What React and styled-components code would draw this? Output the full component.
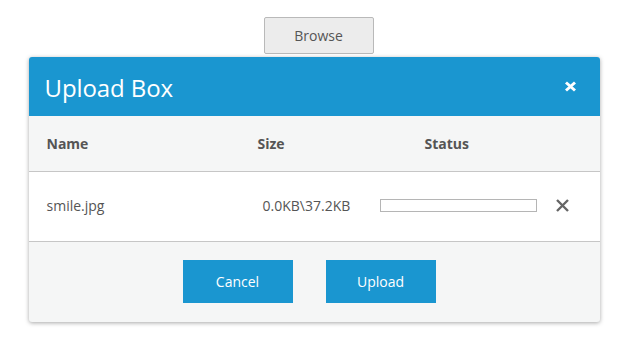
import React from 'react';
import styled, { createGlobalStyle } from 'styled-components';

const GlobalStyle = createGlobalStyle`
    html, body {
        margin: 0;
        padding: 0;
        background: #ffffff;
    }
    body {
        font-family: 'Open Sans', 'Noto Sans', sans-serif;
    }
`;

const Page = styled.div`
    width: 619px;
    height: 343px;
    display: flex;
    flex-direction: column;
    align-items: center;
    padding-top: 17px;
    box-sizing: border-box;
`;

const BrowseButton = styled.button`
    width: 110px;
    height: 37px;
    margin-left: 18px;
    box-sizing: border-box;
    background: #ececec;
    border: 1px solid #b9b9b9;
    border-radius: 2px;
    font-family: 'Open Sans', sans-serif;
    font-size: 14px;
    color: #555;
    padding: 0;
`;

const Dialog = styled.div`
    width: 571px;
    margin-top: 3px;
    margin-left: 9px;
    background: #f5f6f6;
    border-radius: 3px;
    box-shadow: 0 1px 4px rgba(0, 0, 0, 0.35);
    overflow: hidden;
`;

const Header = styled.div`
    height: 59px;
    background: #1a96d0;
    display: flex;
    align-items: center;
    justify-content: space-between;
    padding: 0 23px 0 16px;
`;

const Title = styled.div`
    color: #ffffff;
    font-size: 24px;
    font-weight: 400;
    letter-spacing: -0.1px;
    margin-top: 1px;
`;

const Row = styled.div`
    display: grid;
    grid-template-columns: 211px 122px 175px 1fr;
    align-items: center;
    height: ${({ h }) => h}px;
    padding-left: 18px;
    background: ${({ bg }) => bg};
    border-bottom: 1px solid #c6c6c6;
    color: #555555;
    font-size: 14px;
`;

const HeadCell = styled.div`
    font-weight: 700;
    color: #555555;
    padding-left: ${({ pl }) => pl || 0}px;
`;

const Cell = styled.div`
    color: #555555;
    padding-left: ${({ pl }) => pl || 0}px;
    margin-top: -2px;
`;

const Progress = styled.div`
    width: 157px;
    height: 13px;
    box-sizing: border-box;
    border: 1px solid #b5b5b5;
    background: #ffffff;
    margin-top: -3px;
`;

const RemoveIcon = styled.svg`
    display: block;
    margin-left: 0;
    margin-top: -3px;
`;

const Footer = styled.div`
    height: 80px;
    display: flex;
    justify-content: center;
    align-items: flex-start;
    gap: 33px;
    padding: 18px 10px 0 0;
    box-sizing: border-box;
`;

const ActionButton = styled.button`
    width: 110px;
    height: 43px;
    border: none;
    background: #1a96d0;
    color: #ffffff;
    font-family: 'Open Sans', sans-serif;
    font-size: 14px;
    padding: 0;
`;

export default function App() {
    return (
        <>
            <GlobalStyle />
            <Page>
                <BrowseButton>Browse</BrowseButton>
                <Dialog>
                    <Header>
                        <Title>Upload Box</Title>
                        <svg width="13" height="11" viewBox="0 0 13 11">
                            <path d="M2 1.5 L11 9.5 M11 1.5 L2 9.5" stroke="#fff" strokeWidth="3" />
                        </svg>
                    </Header>
                    <Row h={55} bg="#f5f6f6">
                        <HeadCell>Name</HeadCell>
                        <HeadCell>Size</HeadCell>
                        <HeadCell pl={45}>Status</HeadCell>
                        <div />
                    </Row>
                    <Row h={69} bg="#ffffff">
                        <Cell>smile.jpg</Cell>
                        <Cell pl={5}>0.0KB\37.2KB</Cell>
                        <Progress />
                        <RemoveIcon width="15" height="15" viewBox="0 0 15 15">
                            <path d="M2 2 L13 13 M13 2 L2 13" stroke="#666" strokeWidth="2.4" />
                        </RemoveIcon>
                    </Row>
                    <Footer>
                        <ActionButton>Cancel</ActionButton>
                        <ActionButton>Upload</ActionButton>
                    </Footer>
                </Dialog>
            </Page>
        </>
    );
}
